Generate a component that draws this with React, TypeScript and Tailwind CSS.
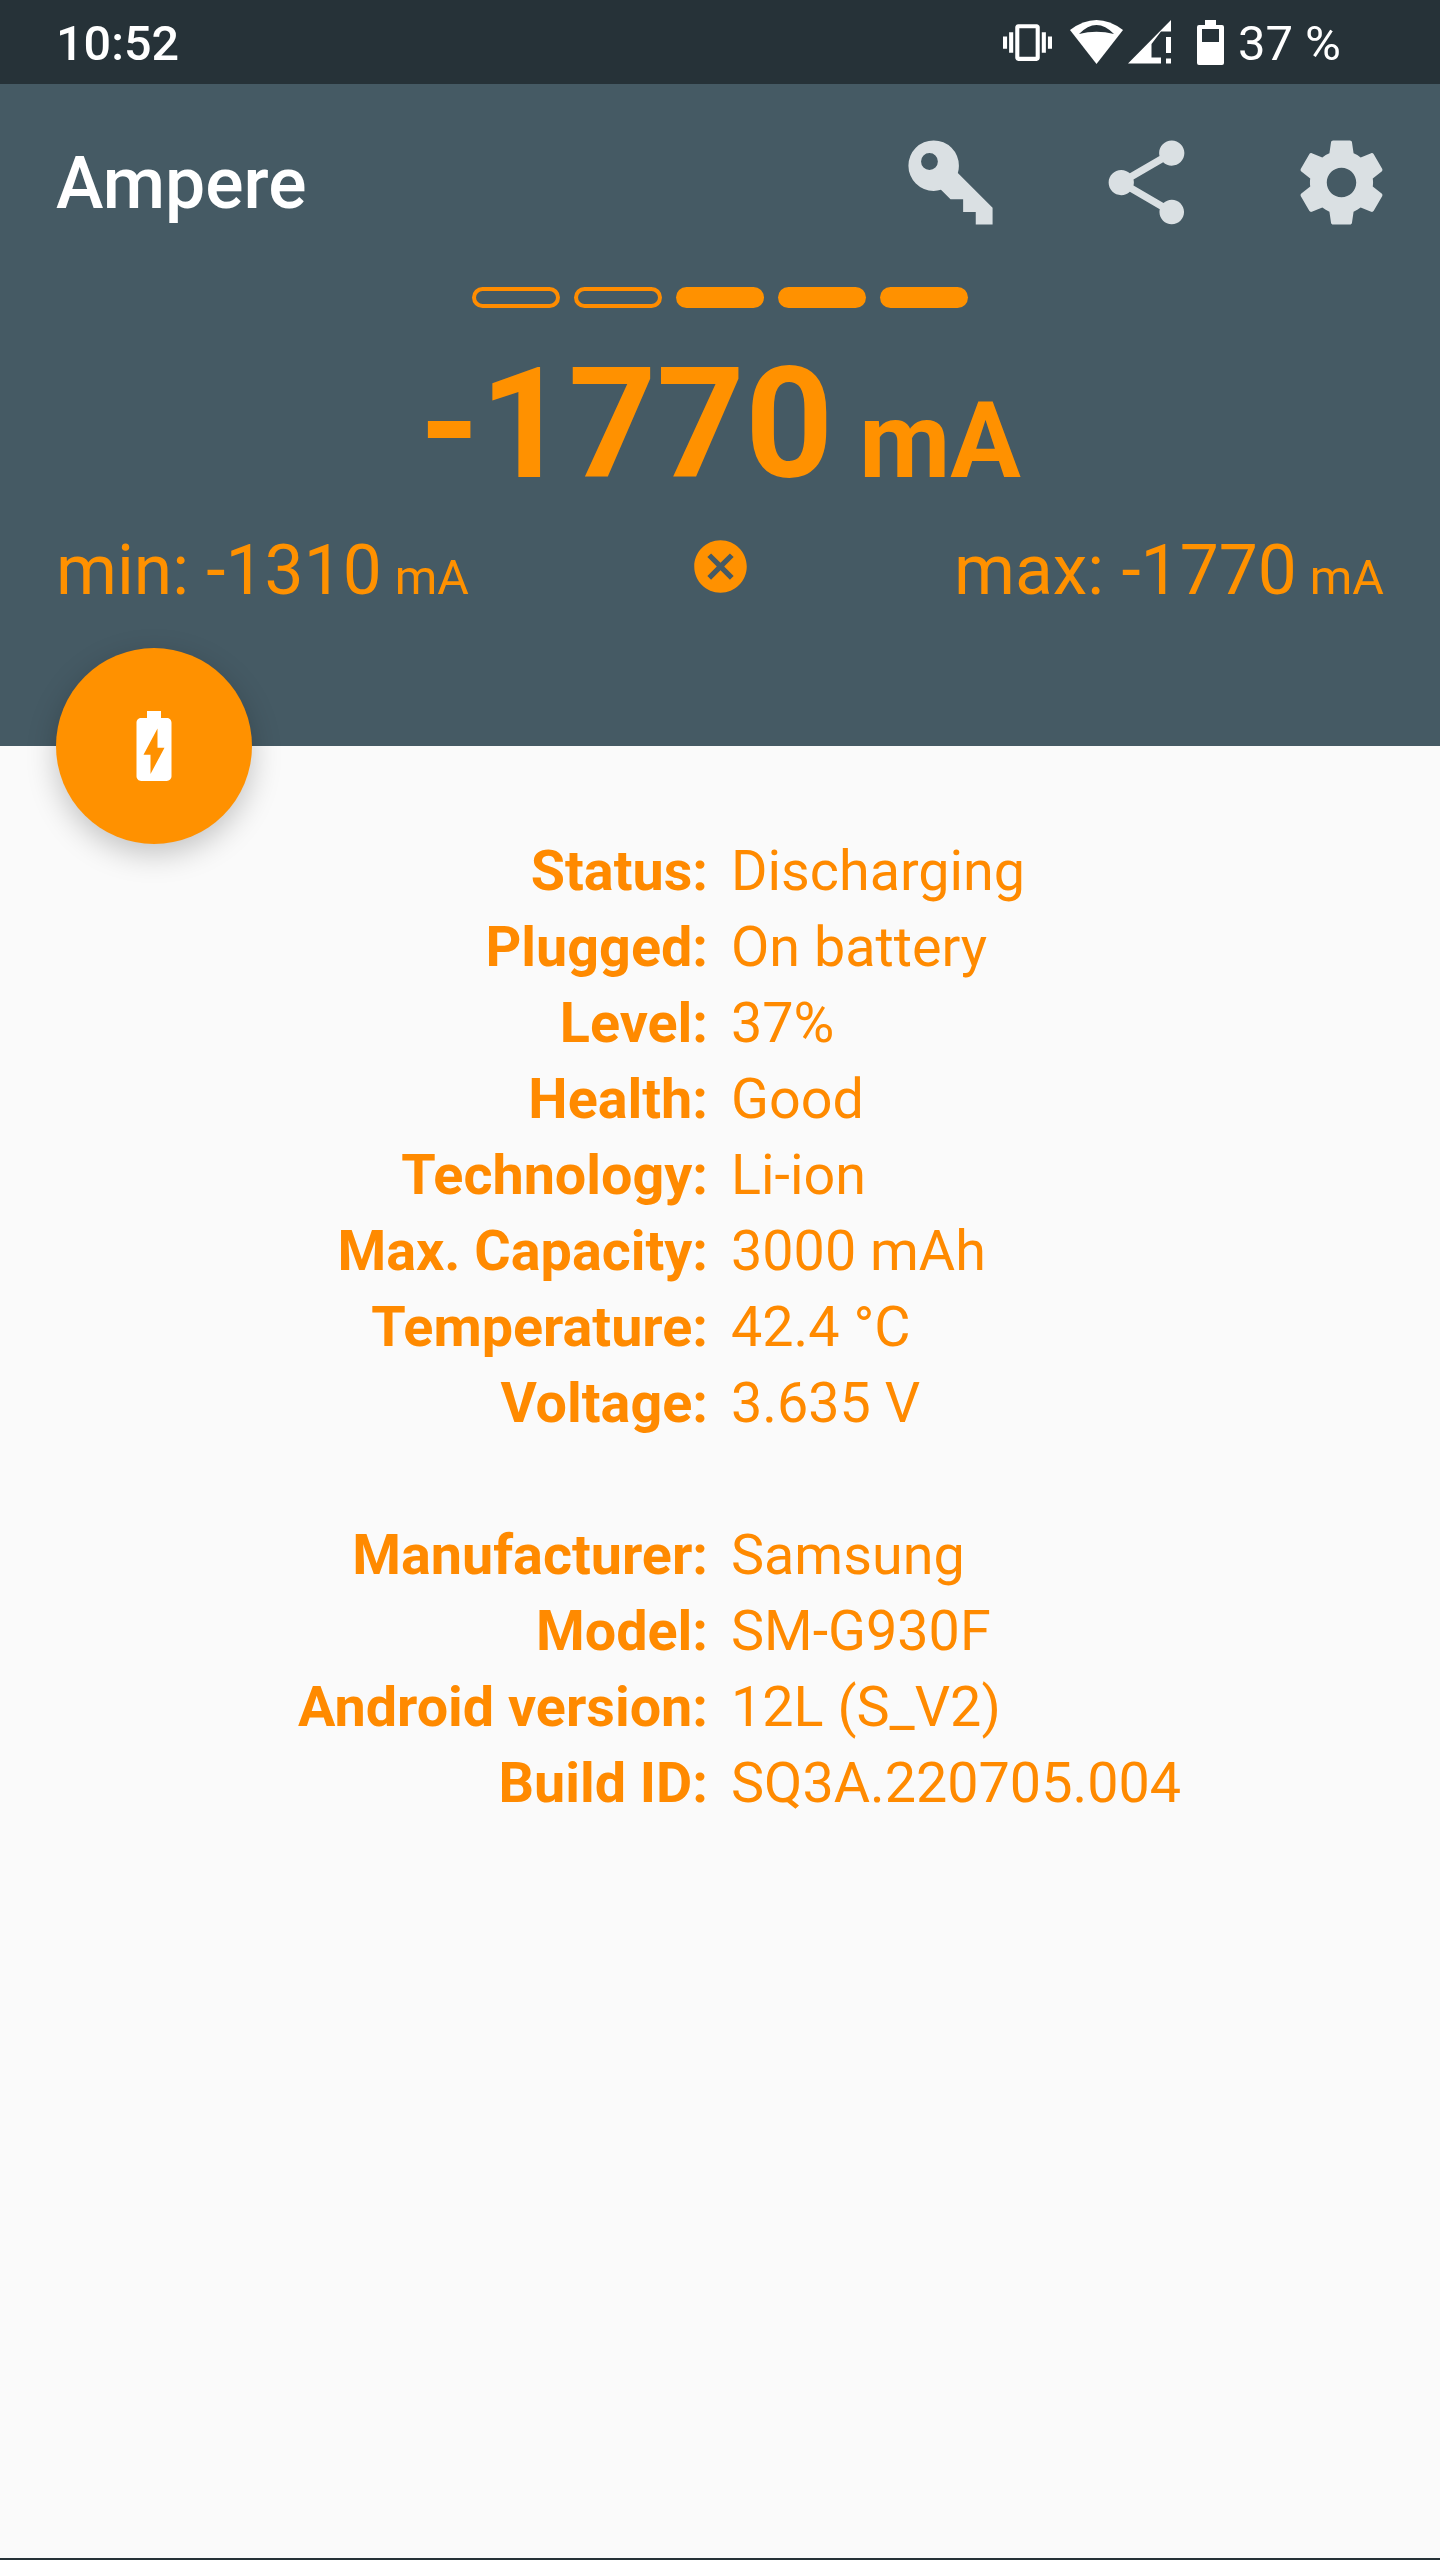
import React from 'react';

const BATTERY_ROWS = [
  ['Status:', 'Discharging'],
  ['Plugged:', 'On battery'],
  ['Level:', '37%'],
  ['Health:', 'Good'],
  ['Technology:', 'Li-ion'],
  ['Max. Capacity:', '3000 mAh'],
  ['Temperature:', '42.4 °C'],
  ['Voltage:', '3.635 V'],
];

const DEVICE_ROWS = [
  ['Manufacturer:', 'Samsung'],
  ['Model:', 'SM-G930F'],
  ['Android version:', '12L (S_V2)'],
  ['Build ID:', 'SQ3A.220705.004'],
];

function Icon({ d, className }: { d: string; className: string }) {
  return (
    <svg viewBox="0 0 24 24" className={className} fill="currentColor">
      <path d={d} />
    </svg>
  );
}

function StatusBar() {
  return (
    <div className="flex h-[84px] items-center justify-between bg-[#263238] pl-[56px] pr-[99px] text-[49px] leading-[84px] text-white">
      <span className="pt-[4px] text-[48.5px] font-medium">10:52</span>
      <div className="flex items-center">
        {/* vibrate */}
        <Icon
          className="h-[49px] w-[49px]"
          d="M0 15h2V9H0v6zm3 2h2V7H3v10zm19-8v6h2V9h-2zm-3 8h2V7h-2v10zM16.5 3h-9C6.67 3 6 3.67 6 4.5v15c0 .83.67 1.5 1.5 1.5h9c.83 0 1.5-.67 1.5-1.5v-15c0-.83-.67-1.5-1.5-1.5zM16 19H8V5h8v14z"
        />
        {/* wifi */}
        <svg viewBox="0 0 53 44" className="ml-[18px] h-[44px] w-[53px]">
          <path fill="#fff" d="M0 10Q26.5 -10 53 10L26.5 44Z" />
          <path fill="#263238" d="M9 14Q26.5 -4 44 14Q26.5 9.5 9 14Z" />
        </svg>
        {/* cell signal, no data */}
        <svg viewBox="0 0 43 44" className="ml-[5px] h-[44px] w-[43px]">
          <path fill="#fff" d="M0 43.5L43 0V11.5H33L23.5 24V37.5H33V43.5Z" />
          <path fill="#fff" d="M38 17h5v16h-5zM38 38.5h5v5h-5z" />
        </svg>
        {/* battery */}
        <svg viewBox="0 0 27 45" className="ml-[26px] h-[45px] w-[27px]">
          <path
            fill="#fff"
            fillRule="evenodd"
            d="M8 0h11v5h6a2 2 0 0 1 2 2v36a2 2 0 0 1-2 2H2a2 2 0 0 1-2-2V7a2 2 0 0 1 2-2h6zM5 9v13h17V9z"
          />
        </svg>
        <span className="ml-[14px] pt-[4px]">37 %</span>
      </div>
    </div>
  );
}

function Toolbar() {
  return (
    <div className="flex h-[196px] items-center justify-between pl-[56px] pr-[48px]">
      <h1 className="pt-[4px] text-[71.5px] font-medium leading-none text-white">Ampere</h1>
      <div className="flex items-center gap-[94.5px] text-[#dae0e3]">
        <Icon
          className="h-[101px] w-[101px]"
          d="M22,18V22H18V19H15V16H12L9.74,13.74C9.19,13.91 8.61,14 8,14A6,6 0 0,1 2,8A6,6 0 0,1 8,2A6,6 0 0,1 14,8C14,8.61 13.91,9.19 13.74,9.74L22,18M7,5A2,2 0 0,0 5,7A2,2 0 0,0 7,9A2,2 0 0,0 9,7A2,2 0 0,0 7,5Z"
        />
        <Icon
          className="h-[101px] w-[101px]"
          d="M18 16.08c-.76 0-1.44.3-1.96.77L8.91 12.7c.05-.23.09-.46.09-.7s-.04-.47-.09-.7l7.05-4.11c.54.5 1.25.81 2.04.81 1.66 0 3-1.34 3-3s-1.34-3-3-3-3 1.34-3 3c0 .24.04.47.09.7L8.04 9.81C7.5 9.31 6.79 9 6 9c-1.66 0-3 1.34-3 3s1.34 3 3 3c.79 0 1.5-.31 2.04-.81l7.12 4.16c-.05.21-.08.43-.08.65 0 1.61 1.31 2.92 2.92 2.92 1.61 0 2.92-1.31 2.92-2.92s-1.31-2.92-2.92-2.92z"
        />
        <Icon
          className="h-[101px] w-[101px]"
          d="M19.43 12.98c.04-.32.07-.64.07-.98s-.03-.66-.07-.98l2.11-1.65c.19-.15.24-.42.12-.64l-2-3.46c-.12-.22-.39-.3-.61-.22l-2.49 1c-.52-.4-1.08-.73-1.69-.98l-.38-2.65C14.46 2.18 14.25 2 14 2h-4c-.25 0-.46.18-.49.42l-.38 2.65c-.61.25-1.17.59-1.69.98l-2.49-1c-.23-.09-.49 0-.61.22l-2 3.46c-.13.22-.07.49.12.64l2.11 1.65c-.04.32-.07.65-.07.98s.03.66.07.98l-2.11 1.65c-.19.15-.24.42-.12.64l2 3.46c.12.22.39.3.61.22l2.49-1c.52.4 1.08.73 1.69.98l.38 2.65c.03.24.24.42.49.42h4c.25 0 .46-.18.49-.42l.38-2.65c.61-.25 1.17-.59 1.69-.98l2.49 1c.23.09.49 0 .61-.22l2-3.46c.12-.22.07-.49-.12-.64l-2.11-1.65zM12 15.5c-1.93 0-3.5-1.57-3.5-3.5s1.57-3.5 3.5-3.5 3.5 1.57 3.5 3.5-1.57 3.5-3.5 3.5z"
        />
      </div>
    </div>
  );
}

function LevelBars() {
  return (
    <div className="mt-[7px] flex justify-center gap-[14px]">
      <div className="h-[21px] w-[88px] rounded-full border-[4px] border-[#ff8c00]" />
      <div className="h-[21px] w-[88px] rounded-full border-[4px] border-[#ff8c00]" />
      <div className="h-[21px] w-[88px] rounded-full bg-[#ff9100]" />
      <div className="h-[21px] w-[88px] rounded-full bg-[#ff9100]" />
      <div className="h-[21px] w-[88px] rounded-full bg-[#ff9100]" />
    </div>
  );
}

function Header() {
  return (
    <div className="relative h-[662px] bg-[#455a64] text-[#ff9100]">
      <Toolbar />
      <LevelBars />
      <div className="mt-[32px] text-center text-[154px] font-bold leading-[170px]">
        -1770<span className="ml-[26px] text-[105px]">mA</span>
      </div>
      <div className="mt-[4px] grid grid-cols-[1fr_auto_1fr] items-start px-[56px] text-[69.5px] leading-[80px]">
        <div>
          min: -1310<span className="ml-[13px] text-[48.5px]">mA</span>
        </div>
        <Icon
          className="mt-[4px] h-[63px] w-[63px]"
          d="M12 2C6.47 2 2 6.47 2 12s4.47 10 10 10 10-4.47 10-10S17.53 2 12 2zm5 13.59L15.59 17 12 13.41 8.41 17 7 15.59 10.59 12 7 8.41 8.41 7 12 10.59 15.59 7 17 8.41 13.41 12 17 15.59z"
        />
        <div className="text-right">
          max: -1770<span className="ml-[13px] text-[48.5px]">mA</span>
        </div>
      </div>
      {/* fab sits on the header edge */}
      <div className="absolute bottom-[-98px] left-[56px] flex h-[196px] w-[196px] items-center justify-center rounded-full bg-[#ff9100] text-white shadow-[0_10px_30px_rgba(0,0,0,0.22)]">
        <Icon
          className="h-[84px] w-[84px]"
          d="M15.67 4H14V2h-4v2H8.33C7.6 4 7 4.6 7 5.33v15.33C7 21.4 7.6 22 8.33 22h7.33c.74 0 1.34-.6 1.34-1.33V5.33C17 4.6 16.4 4 15.67 4zM11 20v-5.5H9L13 7v5.5h2L11 20z"
        />
      </div>
    </div>
  );
}

function InfoRows({ rows }: { rows: string[][] }) {
  return (
    <div className="grid grid-cols-[708px_1fr] gap-x-[23px]">
      {rows.map(([label, value]) => (
        <React.Fragment key={label}>
          <div className="text-right font-bold">{label}</div>
          <div>{value}</div>
        </React.Fragment>
      ))}
    </div>
  );
}

export default function App() {
  return (
    <div className="flex h-[2560px] w-full flex-col overflow-hidden bg-[#fafafa] font-['Roboto',sans-serif]">
      <StatusBar />
      <Header />
      <div className="flex-1 pt-[87px] text-[55.7px] leading-[76px] text-[#ff8a00]">
        <InfoRows rows={BATTERY_ROWS} />
        <div className="mt-[76px]">
          <InfoRows rows={DEVICE_ROWS} />
        </div>
      </div>
      <div className="h-[2px] bg-[#263238]" />
    </div>
  );
}
